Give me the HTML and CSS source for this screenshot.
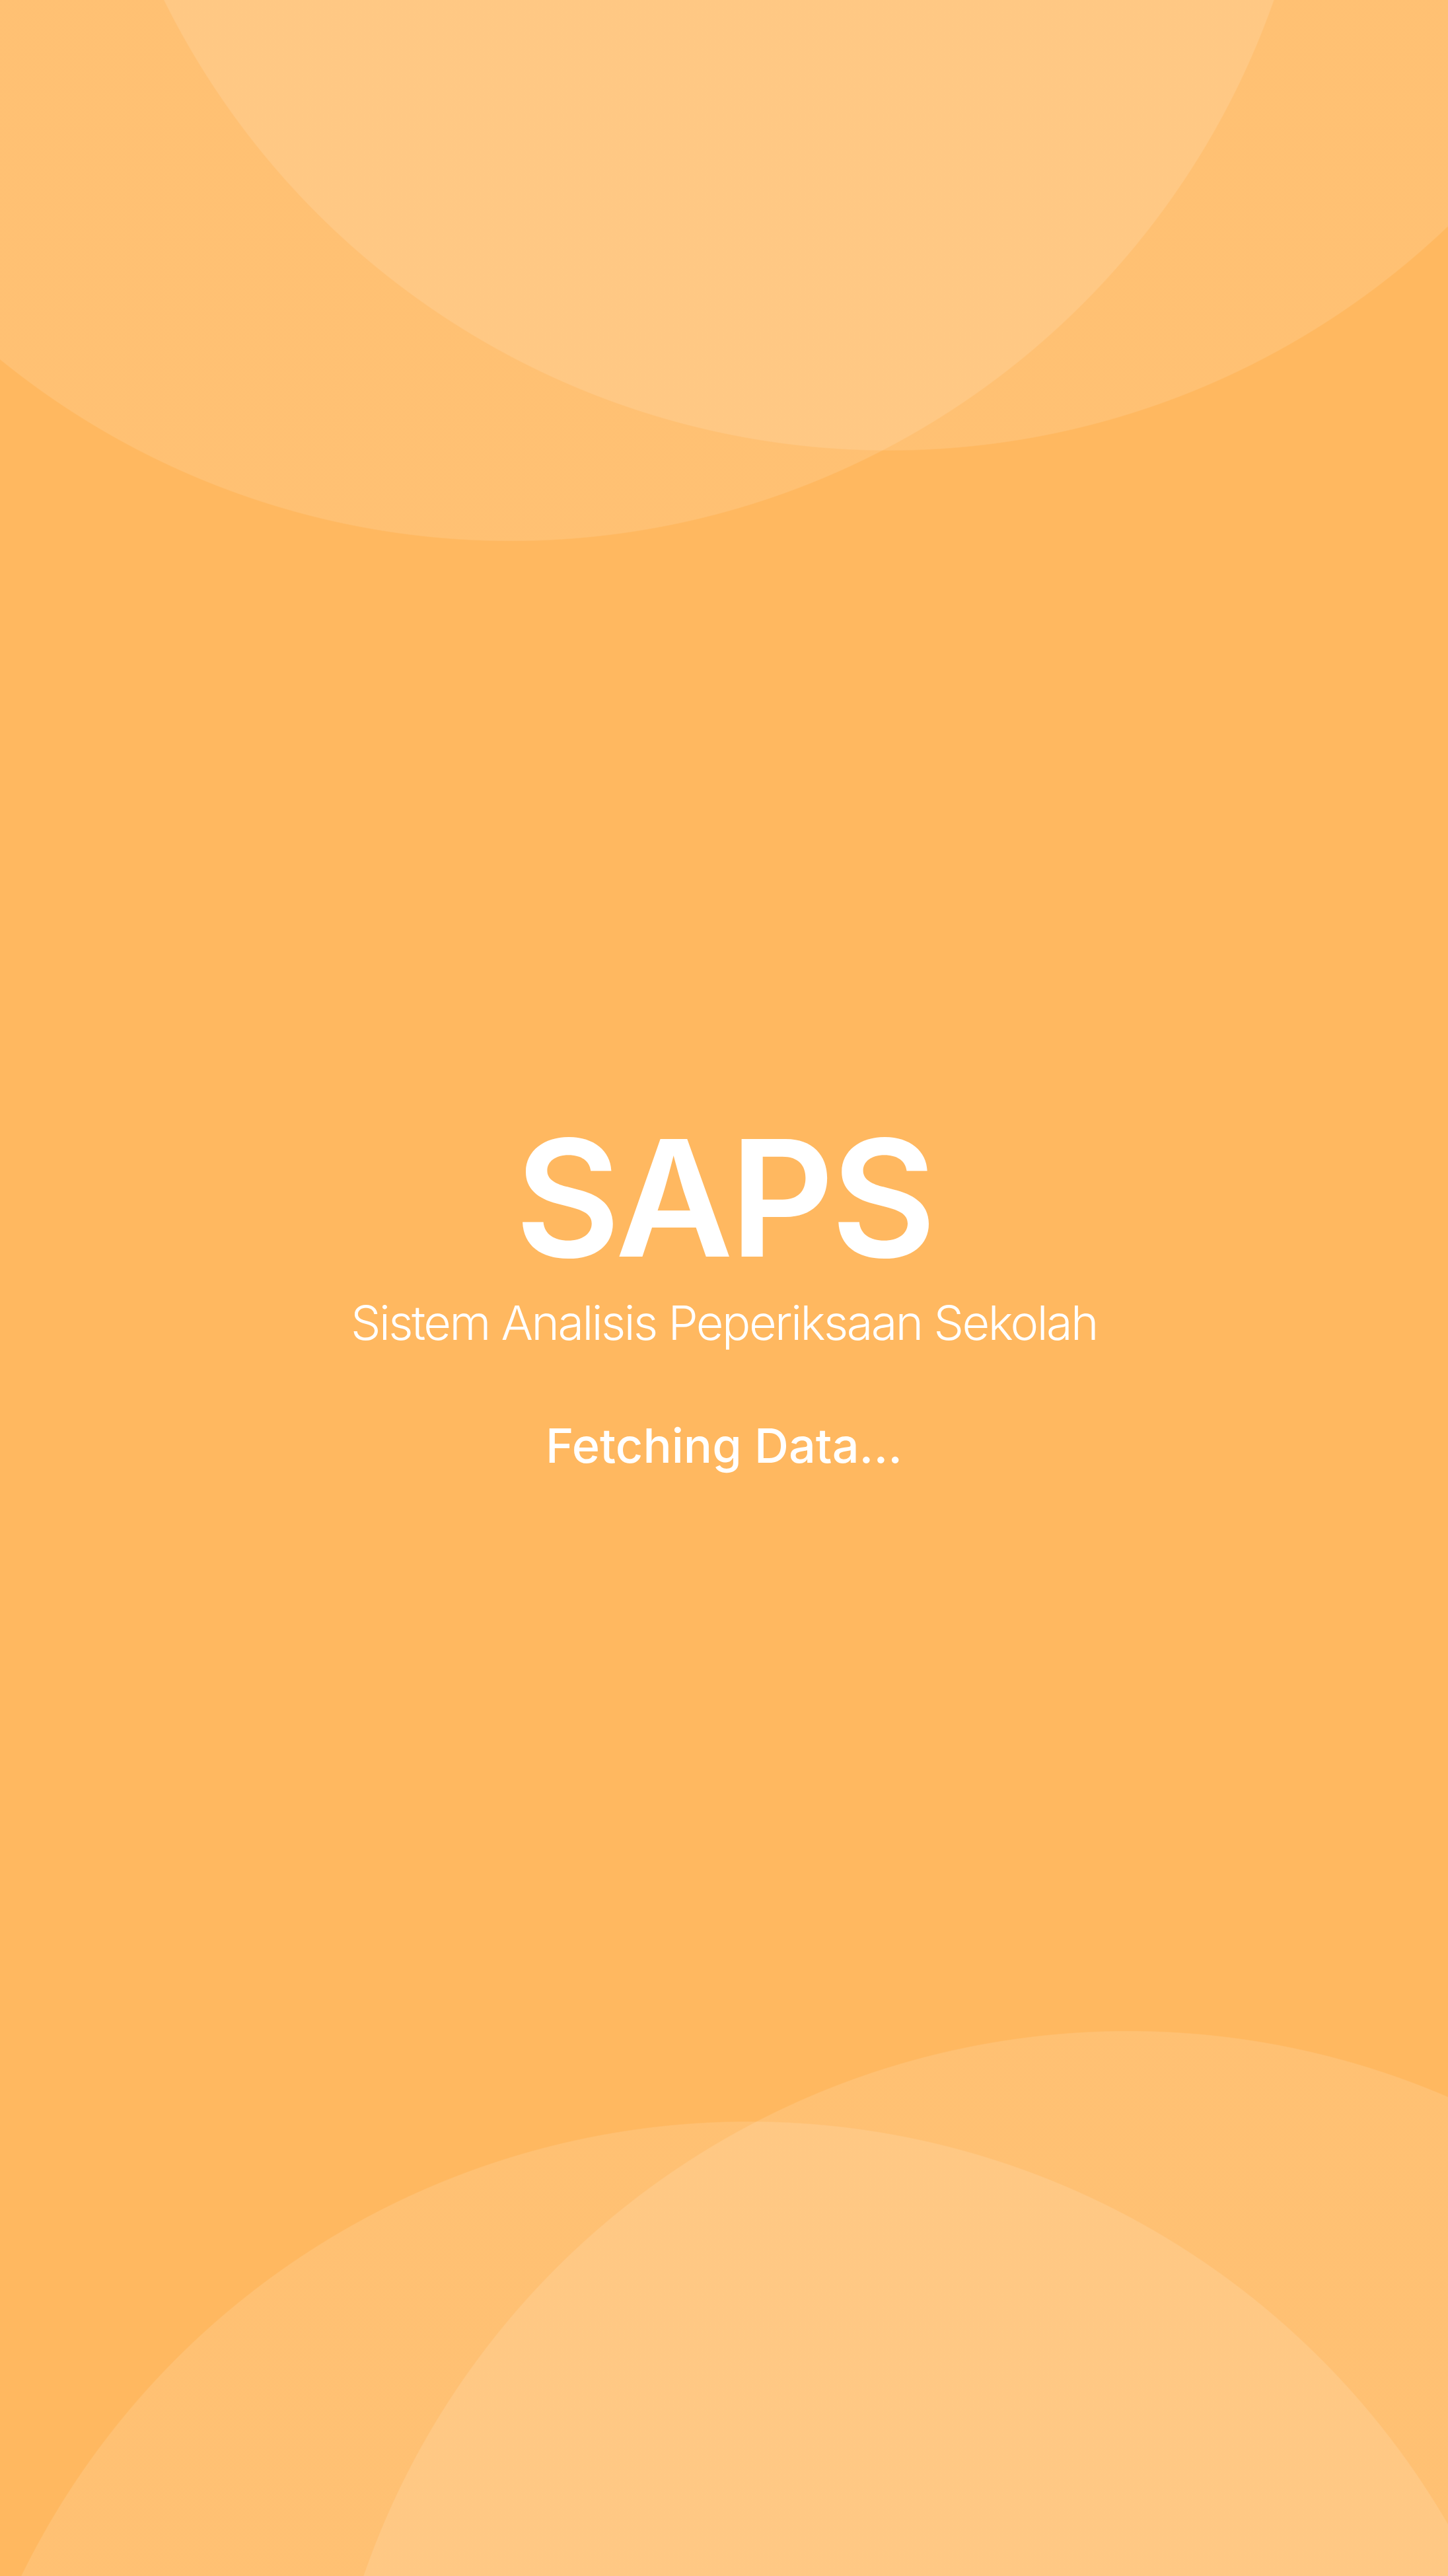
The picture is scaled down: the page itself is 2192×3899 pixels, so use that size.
FILE: index.html
```html
<!DOCTYPE html>
<html lang="id">
<head>
<meta charset="utf-8">
<title>SAPS</title>
<link rel="stylesheet" href="styles.css">
</head>
<body>
<main class="splash">
  <h1 class="title">SAPS</h1>
  <p class="subtitle">Sistem Analisis Peperiksaan Sekolah</p>
  <p class="status">Fetching Data...</p>
</main>
</body>
</html>
```
FILE: styles.css
```css
html, body {
  margin: 0;
  padding: 0;
}

body {
  width: 2192px;
  height: 3899px;
  overflow: hidden;
  background-color: #ffb860;
  background-image:
    radial-gradient(circle 1225px at 773px -406px, rgba(255,255,255,0.12) 1224px, rgba(255,255,255,0) 1225.5px),
    radial-gradient(circle 1225px at 1346px -543px, rgba(255,255,255,0.12) 1224px, rgba(255,255,255,0) 1225.5px),
    radial-gradient(circle 1225px at 1133px 4436px, rgba(255,255,255,0.12) 1224px, rgba(255,255,255,0) 1225.5px),
    radial-gradient(circle 1225px at 1708px 4299px, rgba(255,255,255,0.12) 1224px, rgba(255,255,255,0) 1225.5px);
  background-repeat: no-repeat;
  font-family: Inter, "Noto Sans", "Liberation Sans", sans-serif;
  color: #ffffff;
}

.splash {
  display: flex;
  flex-direction: column;
  align-items: center;
  padding-top: 1691px;
}

.title {
  margin: 0;
  font-size: 245px;
  line-height: 1;
  font-weight: 600;
  letter-spacing: -5px;
}

.subtitle {
  margin: 30px 0 0;
  font-size: 72px;
  line-height: 1;
  font-weight: 300;
  letter-spacing: -2.5px;
}

.status {
  margin: 114px 0 0;
  font-size: 72px;
  line-height: 1;
  font-weight: 500;
  letter-spacing: 0;
}
```
